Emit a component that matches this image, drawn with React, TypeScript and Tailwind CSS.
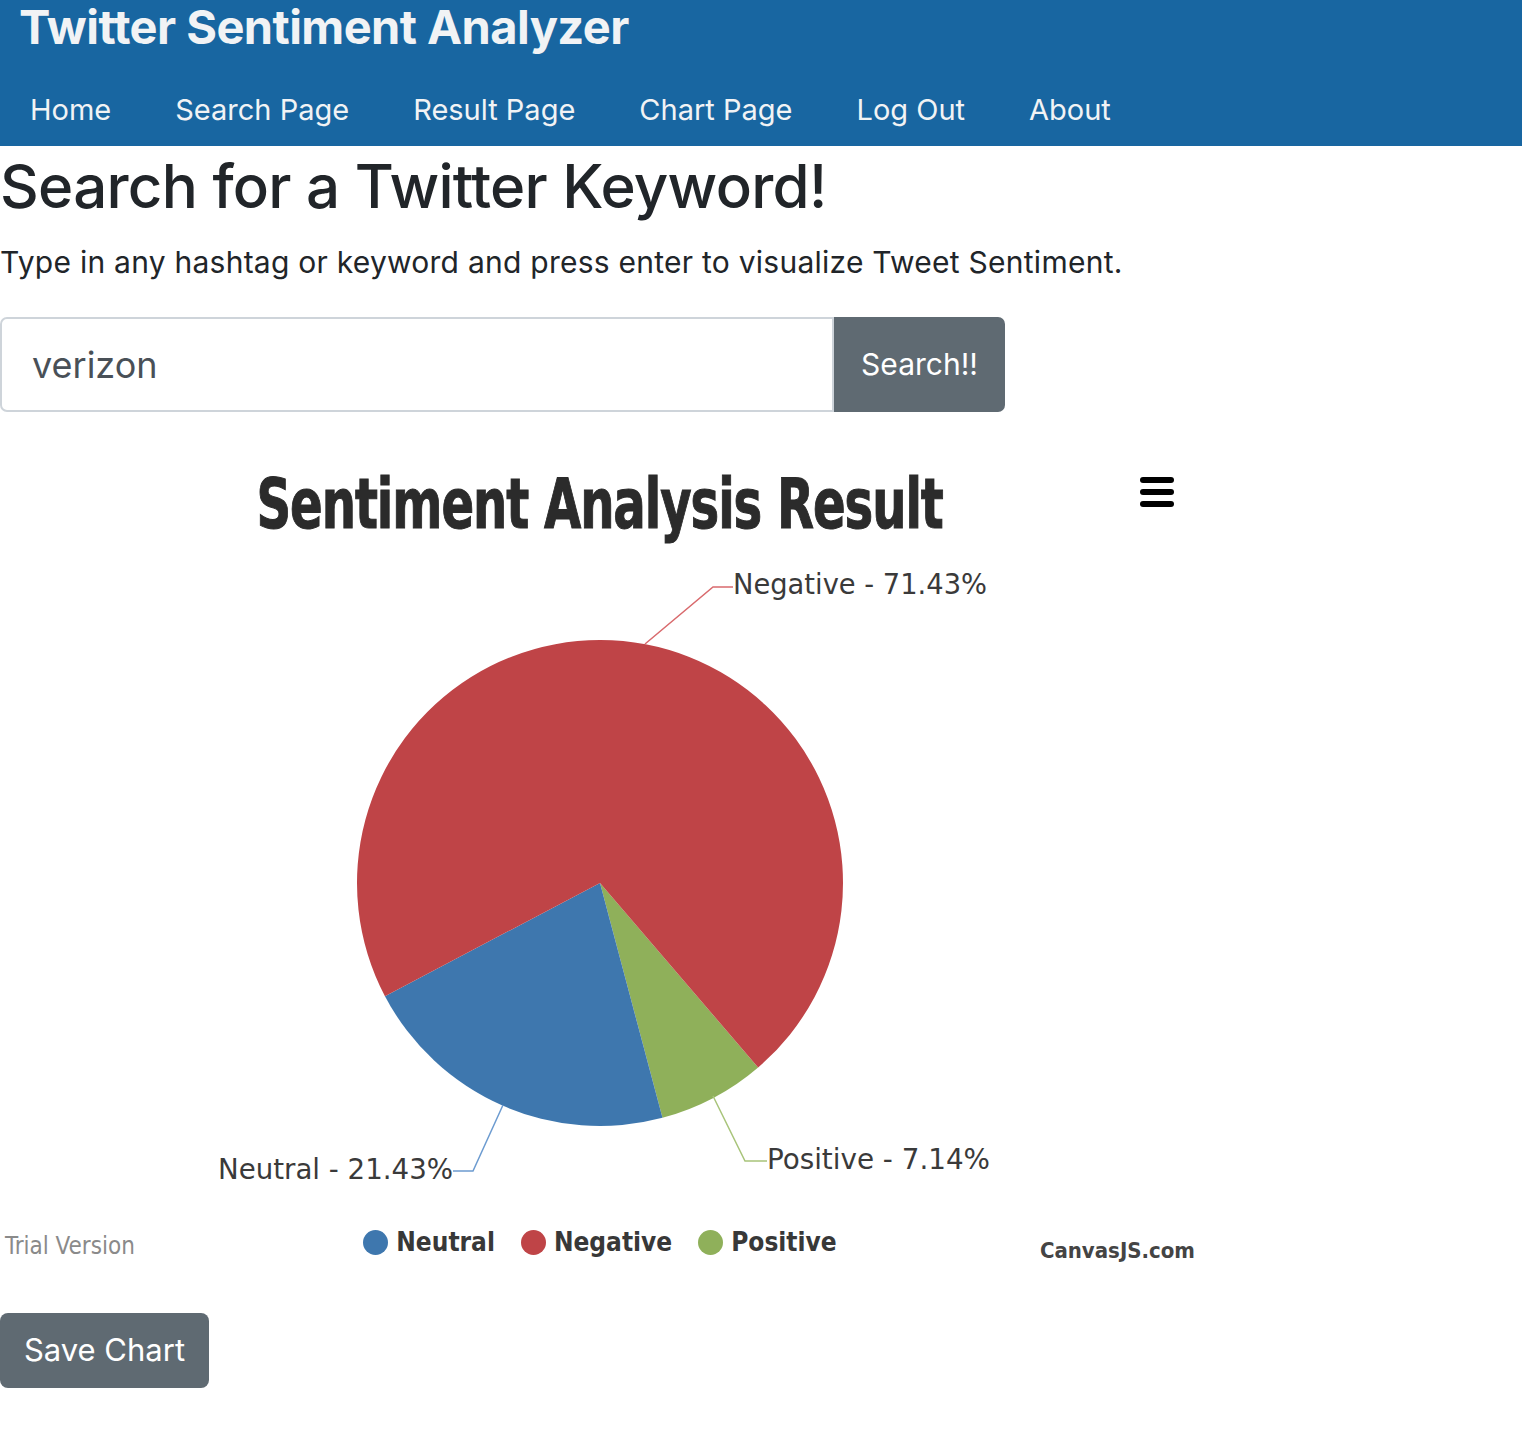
import { useState } from "react";

const NAV = ["Home", "Search Page", "Result Page", "Chart Page", "Log Out", "About"];

const CX = 600;
const CY = 344;
const R = 243;

function polar(deg: number) {
  const a = (deg * Math.PI) / 180;
  return [CX + R * Math.cos(a), CY + R * Math.sin(a)];
}

function slice(a0: number, a1: number) {
  const [x0, y0] = polar(a0);
  const [x1, y1] = polar(a1);
  const large = a1 - a0 > 180 ? 1 : 0;
  return `M${CX} ${CY} L${x0} ${y0} A${R} ${R} 0 ${large} 1 ${x1} ${y1} Z`;
}

const slices = [
  { name: "Positive", color: "#8fb05a", from: 49.4, to: 75.1 },
  { name: "Neutral", color: "#3e77ae", from: 75.1, to: 152.25 },
  { name: "Negative", color: "#bf4447", from: 152.25, to: 409.4 },
];

const legend = [
  { name: "Neutral", color: "#3e77ae" },
  { name: "Negative", color: "#bf4447" },
  { name: "Positive", color: "#8fb05a" },
];

const narrow = "font-['Liberation_Sans_Narrow','DejaVu_Sans_Condensed','Roboto_Condensed',sans-serif]";

export default function App() {
  const [keyword, setKeyword] = useState("verizon");

  return (
    <div className="min-h-[1454px] w-[1522px] bg-white font-['Inter','Liberation_Sans',sans-serif] text-[#212529]">
      {/* Header */}
      <div className="bg-[#1866a1] h-[146px]">
        <div className="pl-[19px] h-[54px] text-[47px] leading-[54px] font-bold text-[#f1f3f5] tracking-[-0.012em]">
          Twitter Sentiment Analyzer
        </div>
        <nav className="flex pt-[36px] -ml-[2px]">
          {NAV.map((item) => (
            <a
              key={item}
              href="#"
              className="px-[32px] text-[29px] leading-[40px] text-[#f1f3f5]"
            >
              {item}
            </a>
          ))}
        </nav>
      </div>

      {/* Search */}
      <h1 className="mt-[4px] text-[60px] leading-[72px] font-medium tracking-[-0.012em]">
        Search for a Twitter Keyword!
      </h1>
      <p className="mt-[22px] text-[30px] leading-[36px] tracking-[0.25px]">
        Type in any hashtag or keyword and press enter to visualize Tweet Sentiment.
      </p>

      <div className="mt-[37px] flex h-[95px] w-[1005px]">
        <input
          value={keyword}
          onChange={(e) => setKeyword(e.target.value)}
          className="w-[834px] h-full border-2 border-[#ced4da] rounded-l-[7px] px-[30px] text-[36px] text-[#495057] outline-none"
        />
        <button className="w-[171px] h-full bg-[#5f6a72] rounded-r-[7px] text-[30px] text-white">
          Search!!
        </button>
      </div>

      {/* Chart */}
      <div className="relative mt-[57px] w-[1200px]">
        <div className="h-[70px] text-center">
          <span
            className={`inline-block scale-x-[0.765] text-[70px] leading-[70px] font-bold tracking-[-0.02em] text-[#2b2b2b] [-webkit-text-stroke:1px_#2b2b2b] ${narrow}`}
          >
            Sentiment Analysis Result
          </span>
        </div>
        <div className="absolute left-[1140px] top-[8px] flex flex-col gap-[6px]">
          <span className="block w-[34px] h-[6px] rounded-full bg-black" />
          <span className="block w-[34px] h-[6px] rounded-full bg-black" />
          <span className="block w-[34px] h-[6px] rounded-full bg-black" />
        </div>

        <svg width="1200" height="660" className="block">
          {slices.map((s) => (
            <path key={s.name} d={slice(s.from, s.to)} fill={s.color} />
          ))}
          <polyline points="645,105 713,48 733,48" fill="none" stroke="#d96a6d" strokeWidth="1.5" />
          <polyline points="503,566 473,632 453,632" fill="none" stroke="#6c9bd0" strokeWidth="1.5" />
          <polyline points="713,557 745,622 767,622" fill="none" stroke="#a8c47a" strokeWidth="1.5" />
          <g fill="#3a3a3a" fontSize="29" fontFamily="'Liberation Sans Narrow','DejaVu Sans Condensed',sans-serif">
            <text x="733" y="55" textLength="254" lengthAdjust="spacingAndGlyphs">
              Negative - 71.43%
            </text>
            <text x="218" y="640" textLength="235" lengthAdjust="spacingAndGlyphs">
              Neutral - 21.43%
            </text>
            <text x="767" y="630" textLength="223" lengthAdjust="spacingAndGlyphs">
              Positive - 7.14%
            </text>
          </g>
        </svg>

        <div className="grid grid-cols-[1fr_auto_1fr] items-center h-[86px] px-[5px]">
          <span className={`mt-[8px] text-[24px] text-[#8a8a8a] ${narrow}`}>Trial Version</span>
          <div className={`flex items-center gap-[26px] text-[26px] font-bold text-[#383838] ${narrow}`}>
            {legend.map((l) => (
              <div key={l.name} className="flex items-center gap-[8px]">
                <span
                  className="block w-[25px] h-[25px] rounded-full"
                  style={{ backgroundColor: l.color }}
                />
                <span>{l.name}</span>
              </div>
            ))}
          </div>
          <span className={`justify-self-end mt-[16px] text-[22px] font-bold text-[#444] ${narrow}`}>
            CanvasJS.com
          </span>
        </div>
      </div>

      <button className="mt-[28px] w-[209px] h-[75px] bg-[#5f6a72] rounded-[8px] text-[31px] text-white">
        Save Chart
      </button>
    </div>
  );
}
